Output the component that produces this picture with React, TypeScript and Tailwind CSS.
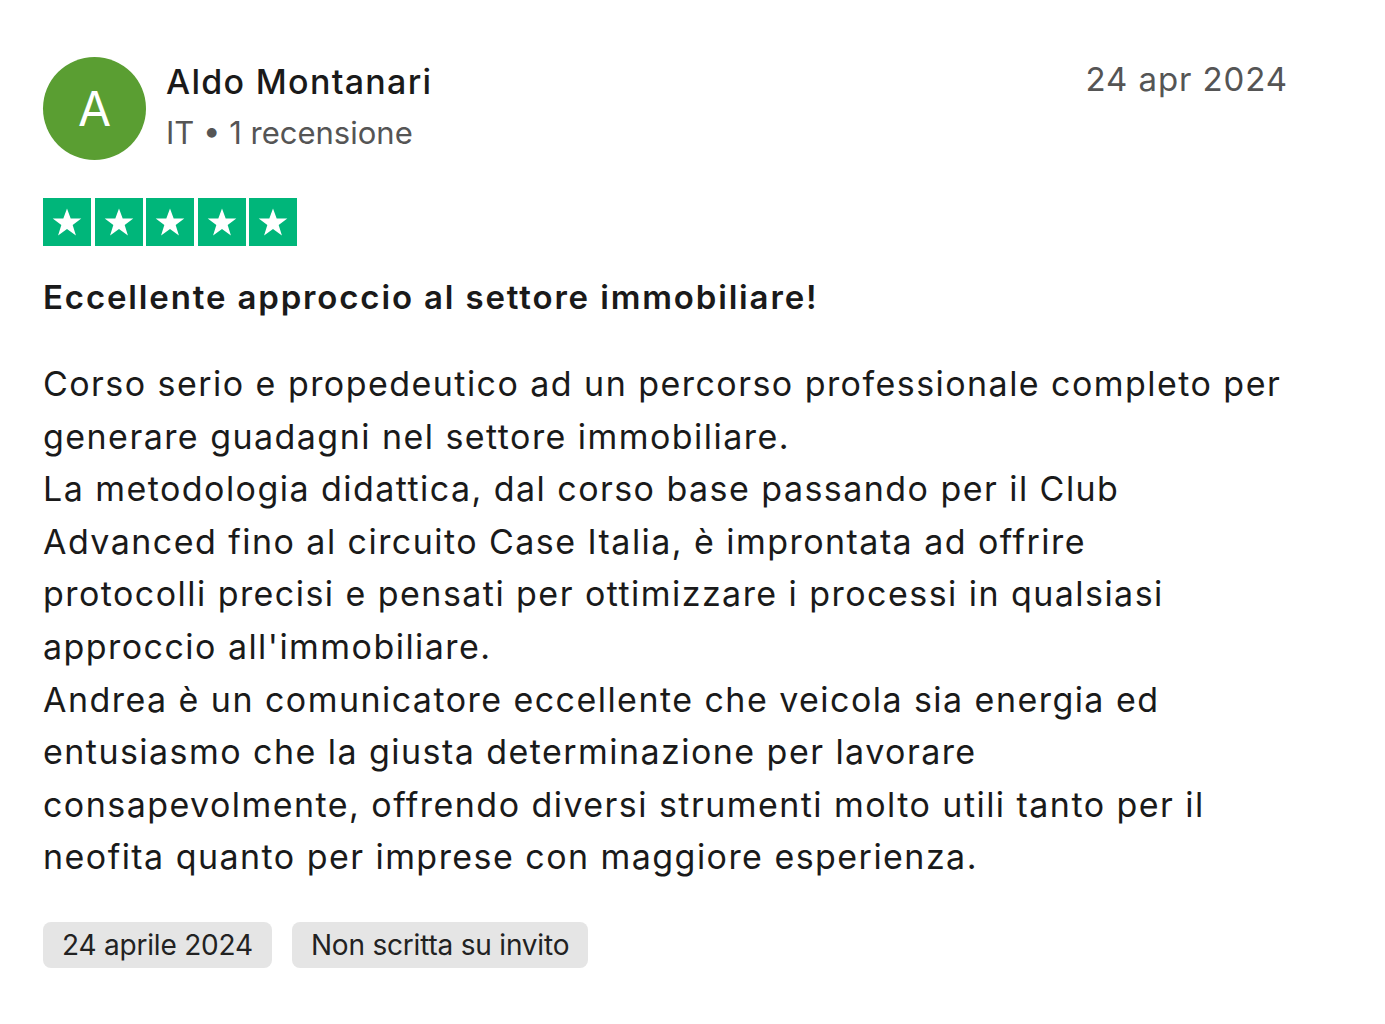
import React from "react";

function Star() {
  return (
    <div className="w-[48px] h-[48px] bg-[#00b67a] flex items-center justify-center">
      <svg width="34" height="34" viewBox="0 0 24 24">
        <path
          d="M12 2.5l2.6 7.1h7.5l-6.1 4.5 2.3 7.4L12 17l-6.3 4.5 2.3-7.4-6.1-4.5h7.5z"
          fill="#fff"
        />
      </svg>
    </div>
  );
}

export default function App() {
  return (
    <div
      className="w-[1385px] h-[1024px] bg-white text-[#1a1a1a]"
      style={{ fontFamily: "Inter, 'Noto Sans', sans-serif" }}
    >
      <div className="pl-[43px] pr-[97px] pt-[57px]">
        <div className="flex items-start justify-between">
          <div className="flex items-start gap-[20px]">
            <div className="w-[103px] h-[103px] rounded-full bg-[#5a9e32] flex items-center justify-center text-white text-[48px] leading-none">
              A
            </div>
            <div className="flex flex-col pt-[1px]">
              <div className="text-[34px] font-medium leading-[48px] tracking-[1.3px]">Aldo Montanari</div>
              <div className="text-[31px] text-[#555] leading-[54px] tracking-[0px]">IT • 1 recensione</div>
            </div>
          </div>
          <div className="text-[33px] text-[#555] leading-[44px] tracking-[0.9px]">24 apr 2024</div>
        </div>
        <div className="flex gap-[3.5px] mt-[38px]">
          <Star />
          <Star />
          <Star />
          <Star />
          <Star />
        </div>
        <div className="mt-[30px] text-[33px] font-semibold leading-[42px] tracking-[1.85px]">
          Eccellente approccio al settore immobiliare!
        </div>
        <div className="mt-[40px] text-[34px] leading-[52.6px] tracking-[1.45px] text-[#1a1a1a]">
          Corso serio e propedeutico ad un percorso professionale completo per
          <br />
          generare guadagni nel settore immobiliare.
          <br />
          La metodologia didattica, dal corso base passando per il Club
          <br />
          Advanced fino al circuito Case Italia, è improntata ad offrire
          <br />
          protocolli precisi e pensati per ottimizzare i processi in qualsiasi
          <br />
          approccio all'immobiliare.
          <br />
          Andrea è un comunicatore eccellente che veicola sia energia ed
          <br />
          entusiasmo che la giusta determinazione per lavorare
          <br />
          consapevolmente, offrendo diversi strumenti molto utili tanto per il
          <br />
          neofita quanto per imprese con maggiore esperienza.
        </div>
        <div className="flex gap-[20px] mt-[38px]">
          <div className="h-[46px] px-[19px] rounded-[8px] bg-[#e5e5e5] flex items-center text-[28px] text-[#222] tracking-[-0.2px]">
            24 aprile 2024
          </div>
          <div className="h-[46px] px-[19px] rounded-[8px] bg-[#e5e5e5] flex items-center text-[28px] text-[#222] tracking-[-0.2px]">
            Non scritta su invito
          </div>
        </div>
      </div>
    </div>
  );
}
